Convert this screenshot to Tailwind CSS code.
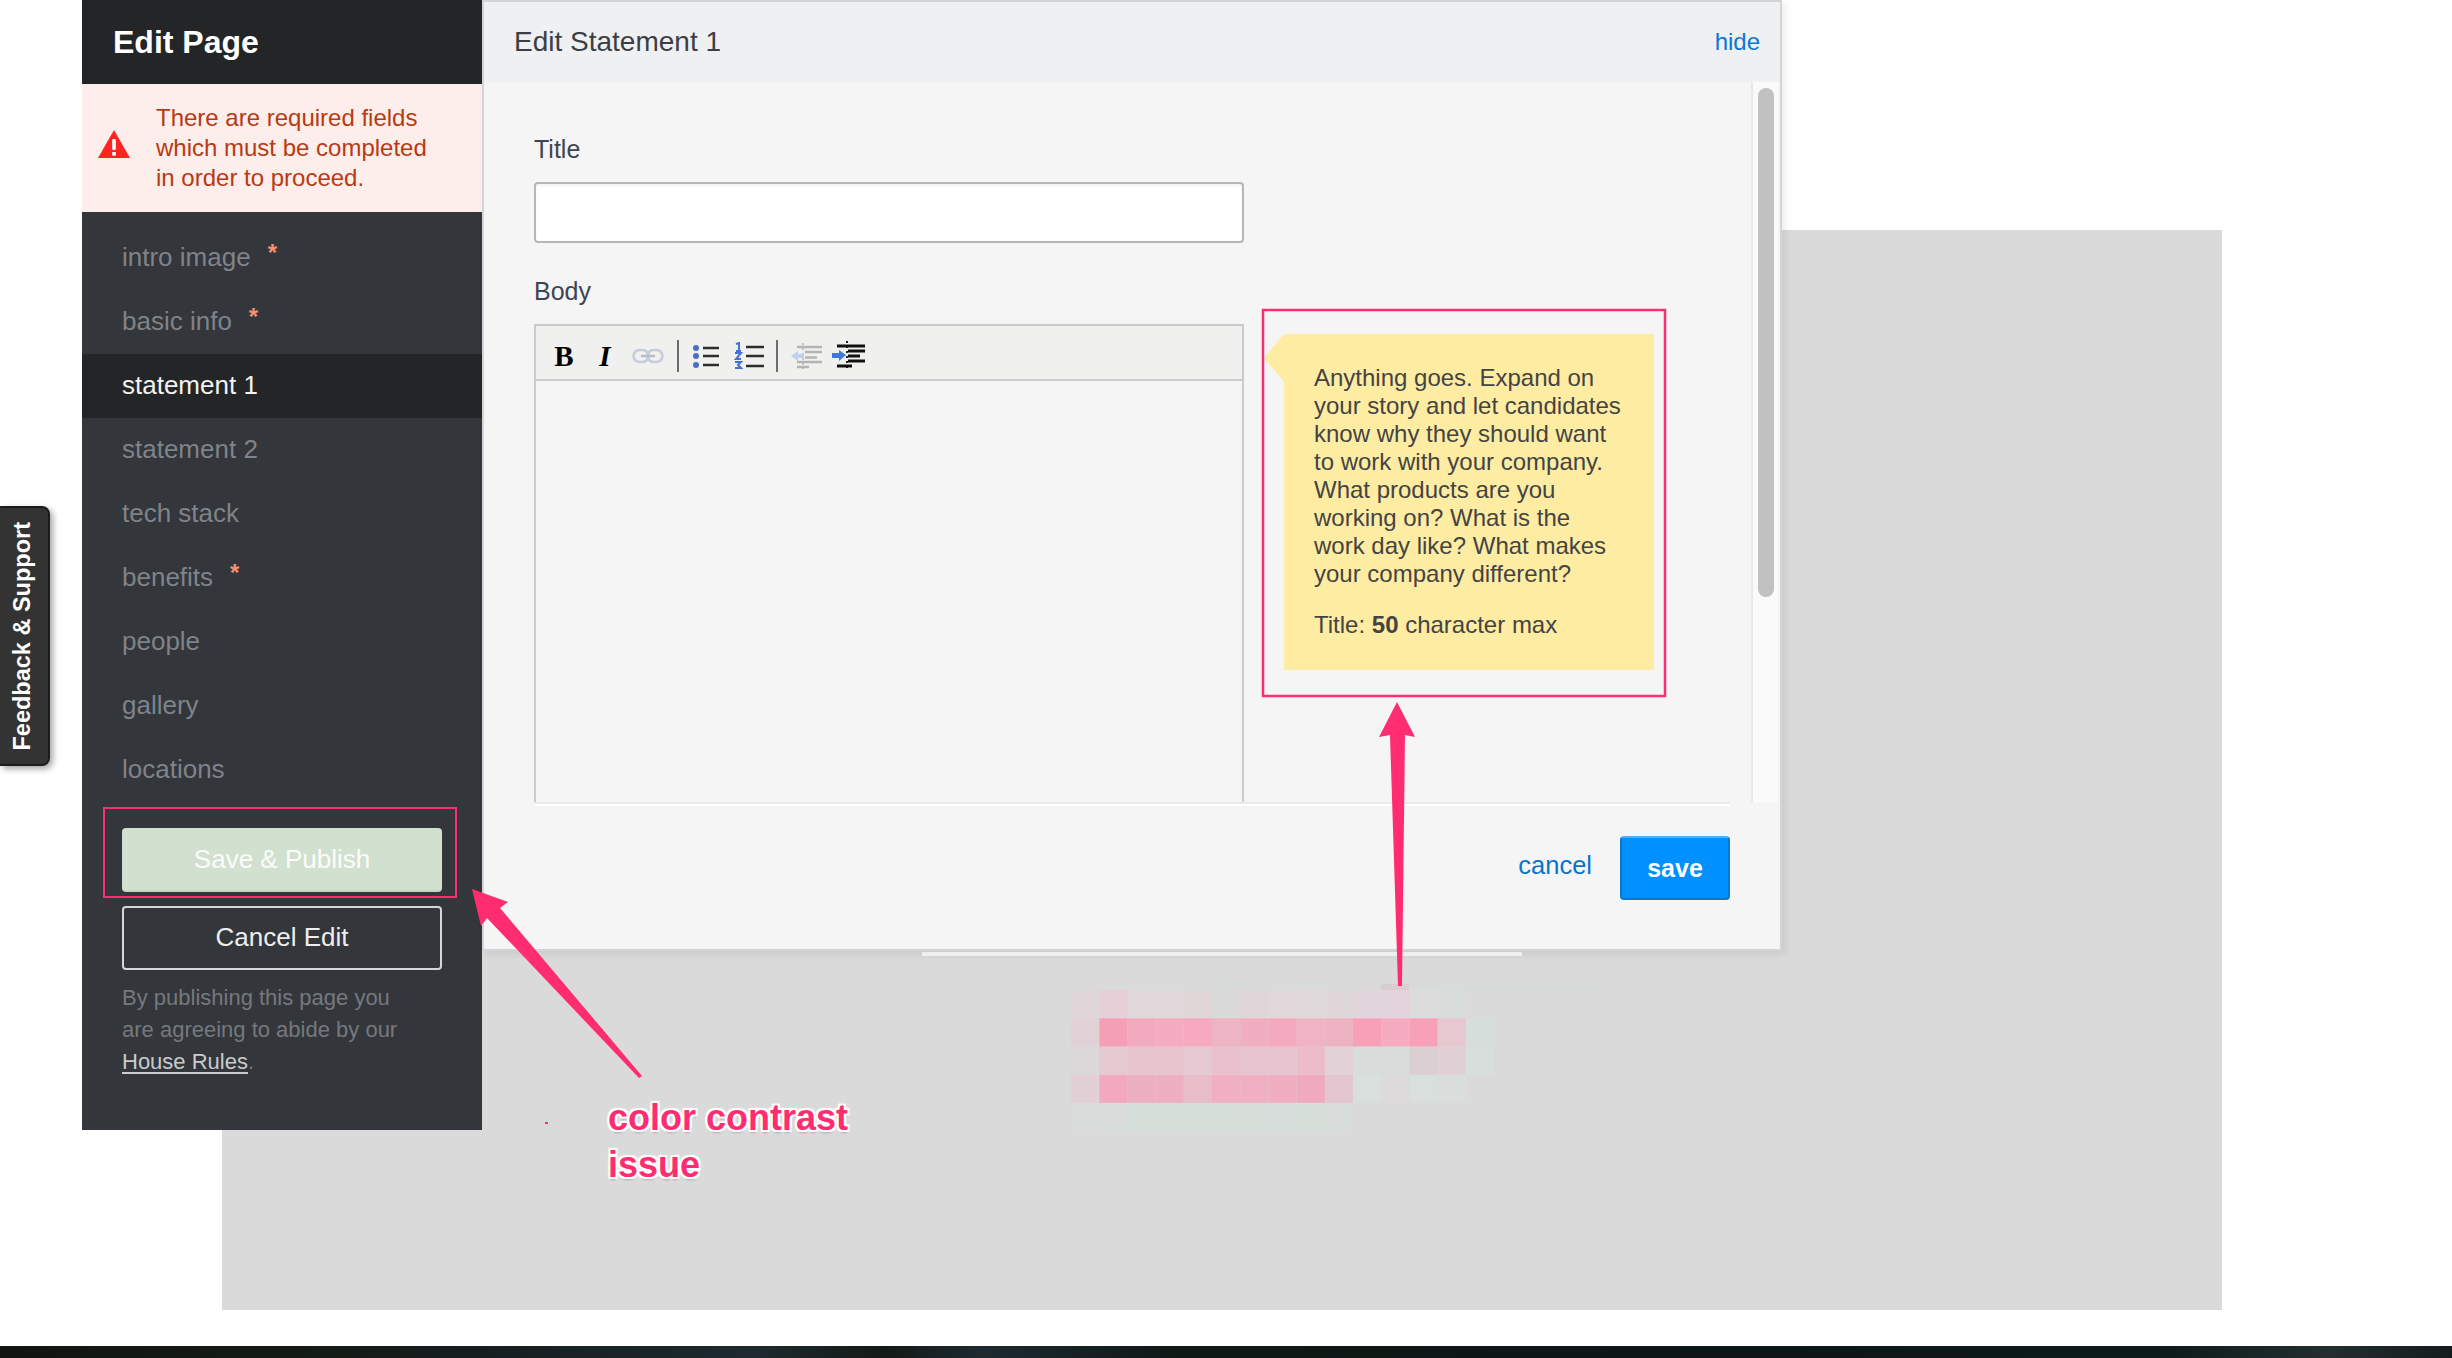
<!DOCTYPE html>
<html lang="en">
<head>
  <meta charset="UTF-8" />
  <title>Edit Page</title>
  <script src="https://cdn.jsdelivr.net/npm/@tailwindcss/browser@4"></script>
</head>
<body class="bg-white font-['Liberation_Sans',Arial,sans-serif] overflow-hidden">
  <div class="relative w-[2452px] h-[1358px] overflow-hidden">

    <!-- Page behind the editor -->
    <div class="pt-[230px] pl-[222px]">
      <div class="w-[2000px] h-[1080px] bg-[#dadada]"></div>
    </div>
    <div class="mt-[36px] h-[12px] bg-[linear-gradient(90deg,#10160f,#141a14_12%,#161e20_20%,#1e2a2e_31%,#141a16_36%,#1e2a30_40%,#101816_48%,#0c1614_70%,#0e1a1a_88%,#242e30_95%,#141c1c)]"></div>

    <!-- Feedback tab -->
    <div class="absolute left-0 top-[506px] w-[50px] h-[260px] flex items-center justify-center pr-[3px] bg-[#333333] border-2 border-l-0 border-[#1c1c1c] rounded-r-[8px] shadow-[3px_3px_6px_rgba(0,0,0,0.35)]">
      <span class="[writing-mode:vertical-rl] rotate-180 text-white font-bold text-[23.500px] leading-none whitespace-nowrap">Feedback &amp; Support</span>
    </div>

    <!-- Editor overlay -->
    <div class="absolute left-[82px] top-0 flex items-start">

      <!-- Sidebar -->
      <aside class="w-[400px] h-[1130px] bg-[#33363a] flex flex-col">
        <div class="h-[84px] flex items-center pl-[31px] bg-[#242527] text-white font-bold text-[32px]">Edit Page</div>
        <div class="h-[128px] flex items-center bg-[#fdeeeb] pl-[16px]">
          <svg class="w-[32px] h-[29px] shrink-0 -mt-[8px]" viewBox="0 0 32 29">
            <path d="M16 0 L32 28 H0 Z" fill="#ff2420" />
            <rect x="14.2" y="9" width="3.6" height="11" rx="1.2" fill="#fff" />
            <rect x="14.2" y="22" width="3.6" height="3.6" fill="#fff" />
          </svg>
          <p class="ml-[26px] text-[24px] leading-[30px] text-[#b83a12]">There are required fields<br />which must be completed<br />in order to proceed.</p>
        </div>
        <nav class="pt-[14px] text-[26px] text-[#7f838a]">
          <div class="h-[64px] flex items-center pl-[40px] pb-[2px]">intro image<span class="ml-[17px] -mt-[8px] text-[24px] font-bold text-[#f98e74]">*</span></div>
          <div class="h-[64px] flex items-center pl-[40px] pb-[2px]">basic info<span class="ml-[17px] -mt-[8px] text-[24px] font-bold text-[#f98e74]">*</span></div>
          <div class="relative h-[64px] flex items-center pl-[40px] pb-[2px] bg-[#242527] text-[#f2f2f2]">
            statement 1
            <span class="absolute left-[400px] top-0 w-[8px] h-[64px] bg-[#f98200]"></span>
          </div>
          <div class="h-[64px] flex items-center pl-[40px] pb-[2px]">statement 2</div>
          <div class="h-[64px] flex items-center pl-[40px] pb-[2px]">tech stack</div>
          <div class="h-[64px] flex items-center pl-[40px] pb-[2px]">benefits<span class="ml-[17px] -mt-[8px] text-[24px] font-bold text-[#f98e74]">*</span></div>
          <div class="h-[64px] flex items-center pl-[40px] pb-[2px]">people</div>
          <div class="h-[64px] flex items-center pl-[40px] pb-[2px]">gallery</div>
          <div class="h-[64px] flex items-center pl-[40px] pb-[2px]">locations</div>
        </nav>
        <div class="px-[40px] pt-[26px]">
          <button class="w-full h-[64px] rounded-[4px] bg-[#d2e0d0] border-b-2 border-[#c5d3c3] text-white/90 text-[26px]">Save &amp; Publish</button>
          <button class="mt-[14px] w-full h-[64px] pb-[2px] rounded-[4px] border-2 border-[#d6d7d9] text-[#eeeeee] text-[26px]">Cancel Edit</button>
          <p class="mt-[12px] text-[22px] leading-[32px] text-[#75797f]">By publishing this page you<br />are agreeing to abide by our<br /><span class="text-[#c9cbce] underline underline-offset-[3px]">House Rules</span>.</p>
        </div>
      </aside>

      <!-- Modal -->
      <section class="relative w-[1300px] h-[951px] flex flex-col bg-[#f5f5f5] border-2 border-[#d3d4d7] shadow-[3px_3px_8px_rgba(0,0,0,0.08)]">
        <header class="h-[80px] shrink-0 flex items-center justify-between pl-[30px] pr-[20px] bg-[#eff0f2]">
          <h2 class="text-[28px] text-[#3b3f45]">Edit Statement 1</h2>
          <a class="text-[24px] text-[#0a78d6]">hide</a>
        </header>

        <div class="h-[720px] flex overflow-hidden">
          <div class="flex-1 flex items-start pl-[50px]">
            <div class="w-[710px] pt-[52px]">
              <label class="block text-[25px] leading-[30px] text-[#3d4650]">Title</label>
              <input type="text" class="block mt-[18px] w-full h-[61px] bg-white border-2 border-[#b6b6b6] rounded-[4px] shadow-[inset_0_2px_3px_rgba(0,0,0,0.05)]" />
              <label class="block mt-[33px] text-[25px] leading-[30px] text-[#3d4650]">Body</label>
              <div class="mt-[18px] h-[480px] border-2 border-b-0 border-[#cbcbcb]">
                <div class="h-[55px] flex items-center pl-[17px] pt-[7px] bg-[#f0f0ee] border-b-2 border-[#cbcbcb]">
                  <span class="w-[22px] text-center font-['Liberation_Serif',serif] font-bold text-[29px] leading-none text-black">B</span>
                  <span class="ml-[20px] w-[20px] text-center font-['Liberation_Serif',serif] font-bold italic text-[29px] leading-none text-black">I</span>
                  <svg class="ml-[17px] w-[32px] h-[16px]" viewBox="0 0 32 16" fill="none" stroke="#c5ccd8" stroke-width="2.5">
                    <rect x="1.5" y="2" width="15" height="12" rx="6" />
                    <rect x="15.5" y="2" width="15" height="12" rx="6" />
                    <path d="M9 8H23" stroke="#b5bdca" />
                  </svg>
                  <span class="ml-[13px] w-[2px] h-[32px] bg-[#6d6a70]"></span>
                  <svg class="ml-[13px] w-[28px] h-[26px]" viewBox="0 0 28 26">
                    <circle cx="4" cy="5" r="3" fill="#4a6fc0" /><circle cx="4" cy="13" r="3" fill="#4a6fc0" /><circle cx="4" cy="22" r="3" fill="#4a6fc0" />
                    <path d="M11 5H27M11 13H27M11 22H27" stroke="#2d2d2d" stroke-width="2.5" />
                  </svg>
                  <svg class="ml-[13px] w-[31px] h-[28px]" viewBox="0 0 31 28">
                    <path d="M3 2L6 1V8M3 9H8M2 11H8L3 17H8M2 20H8L5 23L8 26H2" fill="none" stroke="#4272d8" stroke-width="2" />
                    <path d="M13 5H31M13 14H31M13 24H31" stroke="#2d2d2d" stroke-width="2.5" />
                  </svg>
                  <span class="ml-[12px] w-[2px] h-[32px] bg-[#6d6a70]"></span>
                  <svg class="ml-[13px] w-[32px] h-[30px]" viewBox="0 0 32 30">
                    <path d="M12 2V28" stroke="#c4c4c4" stroke-width="2" stroke-dasharray="2 3" />
                    <path d="M6 6H31M14 11H31M14 16.500H26M6 21H31M6 26H18" stroke="#b4b4b4" stroke-width="2.500" />
                    <path d="M0 15L7 10V13H13V17H7V20Z" fill="#bcd0f0" />
                  </svg>
                  <svg class="ml-[9px] w-[33px] h-[30px]" viewBox="0 0 33 30">
                    <path d="M15 0V30" stroke="#222" stroke-width="2" stroke-dasharray="2 3" />
                    <path d="M5 5H33M16 10H33M16 15H28M16 20H33M5 25H20" stroke="#111" stroke-width="3.200" />
                    <path d="M14 14L7 9V12H0V17H7V20Z" fill="#3e78e0" />
                  </svg>
                </div>
              </div>
            </div>
            <!-- Hint note -->
            <div class="relative mt-[252px] ml-[40px] w-[370px] h-[336px] pt-[30px] pl-[30px] bg-[#feeca2] text-[24px] leading-[28px] text-[#444444]">
              <svg class="absolute -left-[20px] top-0 w-[20px] h-[48px]" viewBox="0 0 20 48"><path d="M20 0V48L0 24Z" fill="#feeca2" /></svg>
              <p>Anything goes. Expand on<br />your story and let candidates<br />know why they should want<br />to work with your company.<br />What products are you<br />working on? What is the<br />work day like? What makes<br />your company different?</p>
              <p class="mt-[23px]">Title: <b>50</b> character max</p>
            </div>
          </div>
          <!-- Scrollbar -->
          <div class="w-[27px] mr-[2px] bg-[#fafafa] border-l-2 border-[#e8e8e8] pt-[6px] pl-[5px]">
            <div class="w-[16px] h-[509px] rounded-full bg-[#c1c1c1]"></div>
          </div>
        </div>

        <footer class="flex-1 bg-[#f5f5f5]">
          <div class="ml-[50px] w-[1196px] h-[4px] border-t-2 border-[#e9e9e9] bg-white"></div>
          <div class="flex items-start justify-end pt-[30px] pr-[50px]">
            <a class="mt-[10px] text-[25.500px] text-[#0a74cc]">cancel</a>
            <button class="ml-[28px] w-[110px] h-[64px] pt-[2px] rounded-[4px] bg-[#0090ff] border-2 border-[#0a76cc] border-t-[#4ab0f8] text-white font-bold text-[25px]">save</button>
          </div>
        </footer>
      </section>
    </div>

    <!-- Screen under the modal edge -->
    <div class="absolute left-[922px] top-[952px] w-[600px] h-[4px] bg-[#efefef]"></div>

    <!-- Annotations -->
    <svg id="marks" class="absolute inset-0 w-[2452px] h-[1358px] pointer-events-none" viewBox="0 0 2452 1358">
      <rect x="1071" y="984" width="540" height="6" fill="#d8dbda" />
      <rect x="1381" y="984" width="28" height="6" fill="#d8cdd0" />
      <rect x="104" y="808" width="352" height="89" fill="none" stroke="#ff2d6f" stroke-width="2" />
      <rect x="1263" y="310" width="402" height="386" fill="none" stroke="#ff2d6f" stroke-width="2.500" />
      <path d="M472 889L508 902L500 908L642 1076L639 1078L487 918L481 926Z" fill="#ff2d6f" />
      <path d="M1397 702L1415 737L1405 735L1402 986H1398L1390 735L1379 737Z" fill="#ff2d6f" />
      <rect x="545" y="1122" width="3" height="2" fill="#ff2d6f" />
    </svg>
    <div class="absolute left-[608px] top-[1094px] font-bold text-[36px] leading-[47px] text-[#ff2d6f] [text-shadow:0_0_2px_#fff,2px_2px_1px_#fff,-2px_-2px_1px_#fff,2px_-2px_1px_#fff,-2px_2px_1px_#fff,0_3px_2px_rgba(0,0,0,0.25)]">color contrast<br />issue</div>
  </div>

  <script>
    // pixelated redaction block under the modal
    const blur = [
      ["#e0d5d9","#e6cfd6","#e0d8db","#e0d8db","#e0d6d8","#dadada","#e0d6da","#e0d8db","#e0d9dc","#e0d7db","#e2d6dc","#e2d4da","#dcdcdc","#d8dcdb"],
      ["#e2d2d7","#f59fb6","#f2aabf","#f5abc0","#f6a9c0","#ecb4c4","#f0aec0","#f4a9c0","#f0b3c4","#edb3c3","#f7a0b8","#f6abc0","#f9a0b9","#e8c8d0","#d6dedb"],
      ["#dcd8da","#e6c8d0","#e8c4ce","#e8c4ce","#e6c8d2","#ebc0ce","#e8c4d0","#e8c4d0","#edbccb","#e2d2d8","#d8dcdb","#dadcdc","#dccfd3","#dfd1d6","#d8dedb"],
      ["#e2d0d6","#f2a8be","#edb0c1","#efafc2","#e8bcc8","#f0b0c2","#f0b0c2","#f1aec2","#f0aac0","#e4c6d0","#d8dfdc","#dcdadb","#d8dfdd","#d9dddc"],
      ["#dadbdb","#d8dcda","#d6ded9","#d6ded9","#d6ded9","#d6ded9","#d7ded9","#d7ddda","#d6ded9","#d8dcdb"]
    ];
    const marks = document.getElementById("marks");
    blur.forEach((row, r) => row.forEach((fill, c) => {
      const rect = document.createElementNS("http://www.w3.org/2000/svg", "rect");
      rect.setAttribute("x", 1071 + c * 28.2);
      rect.setAttribute("y", 990 + r * 28.2);
      rect.setAttribute("width", 28.2);
      rect.setAttribute("height", 28.2);
      rect.setAttribute("fill", fill);
      marks.prepend(rect);
    }));
  </script>
</body>
</html>
